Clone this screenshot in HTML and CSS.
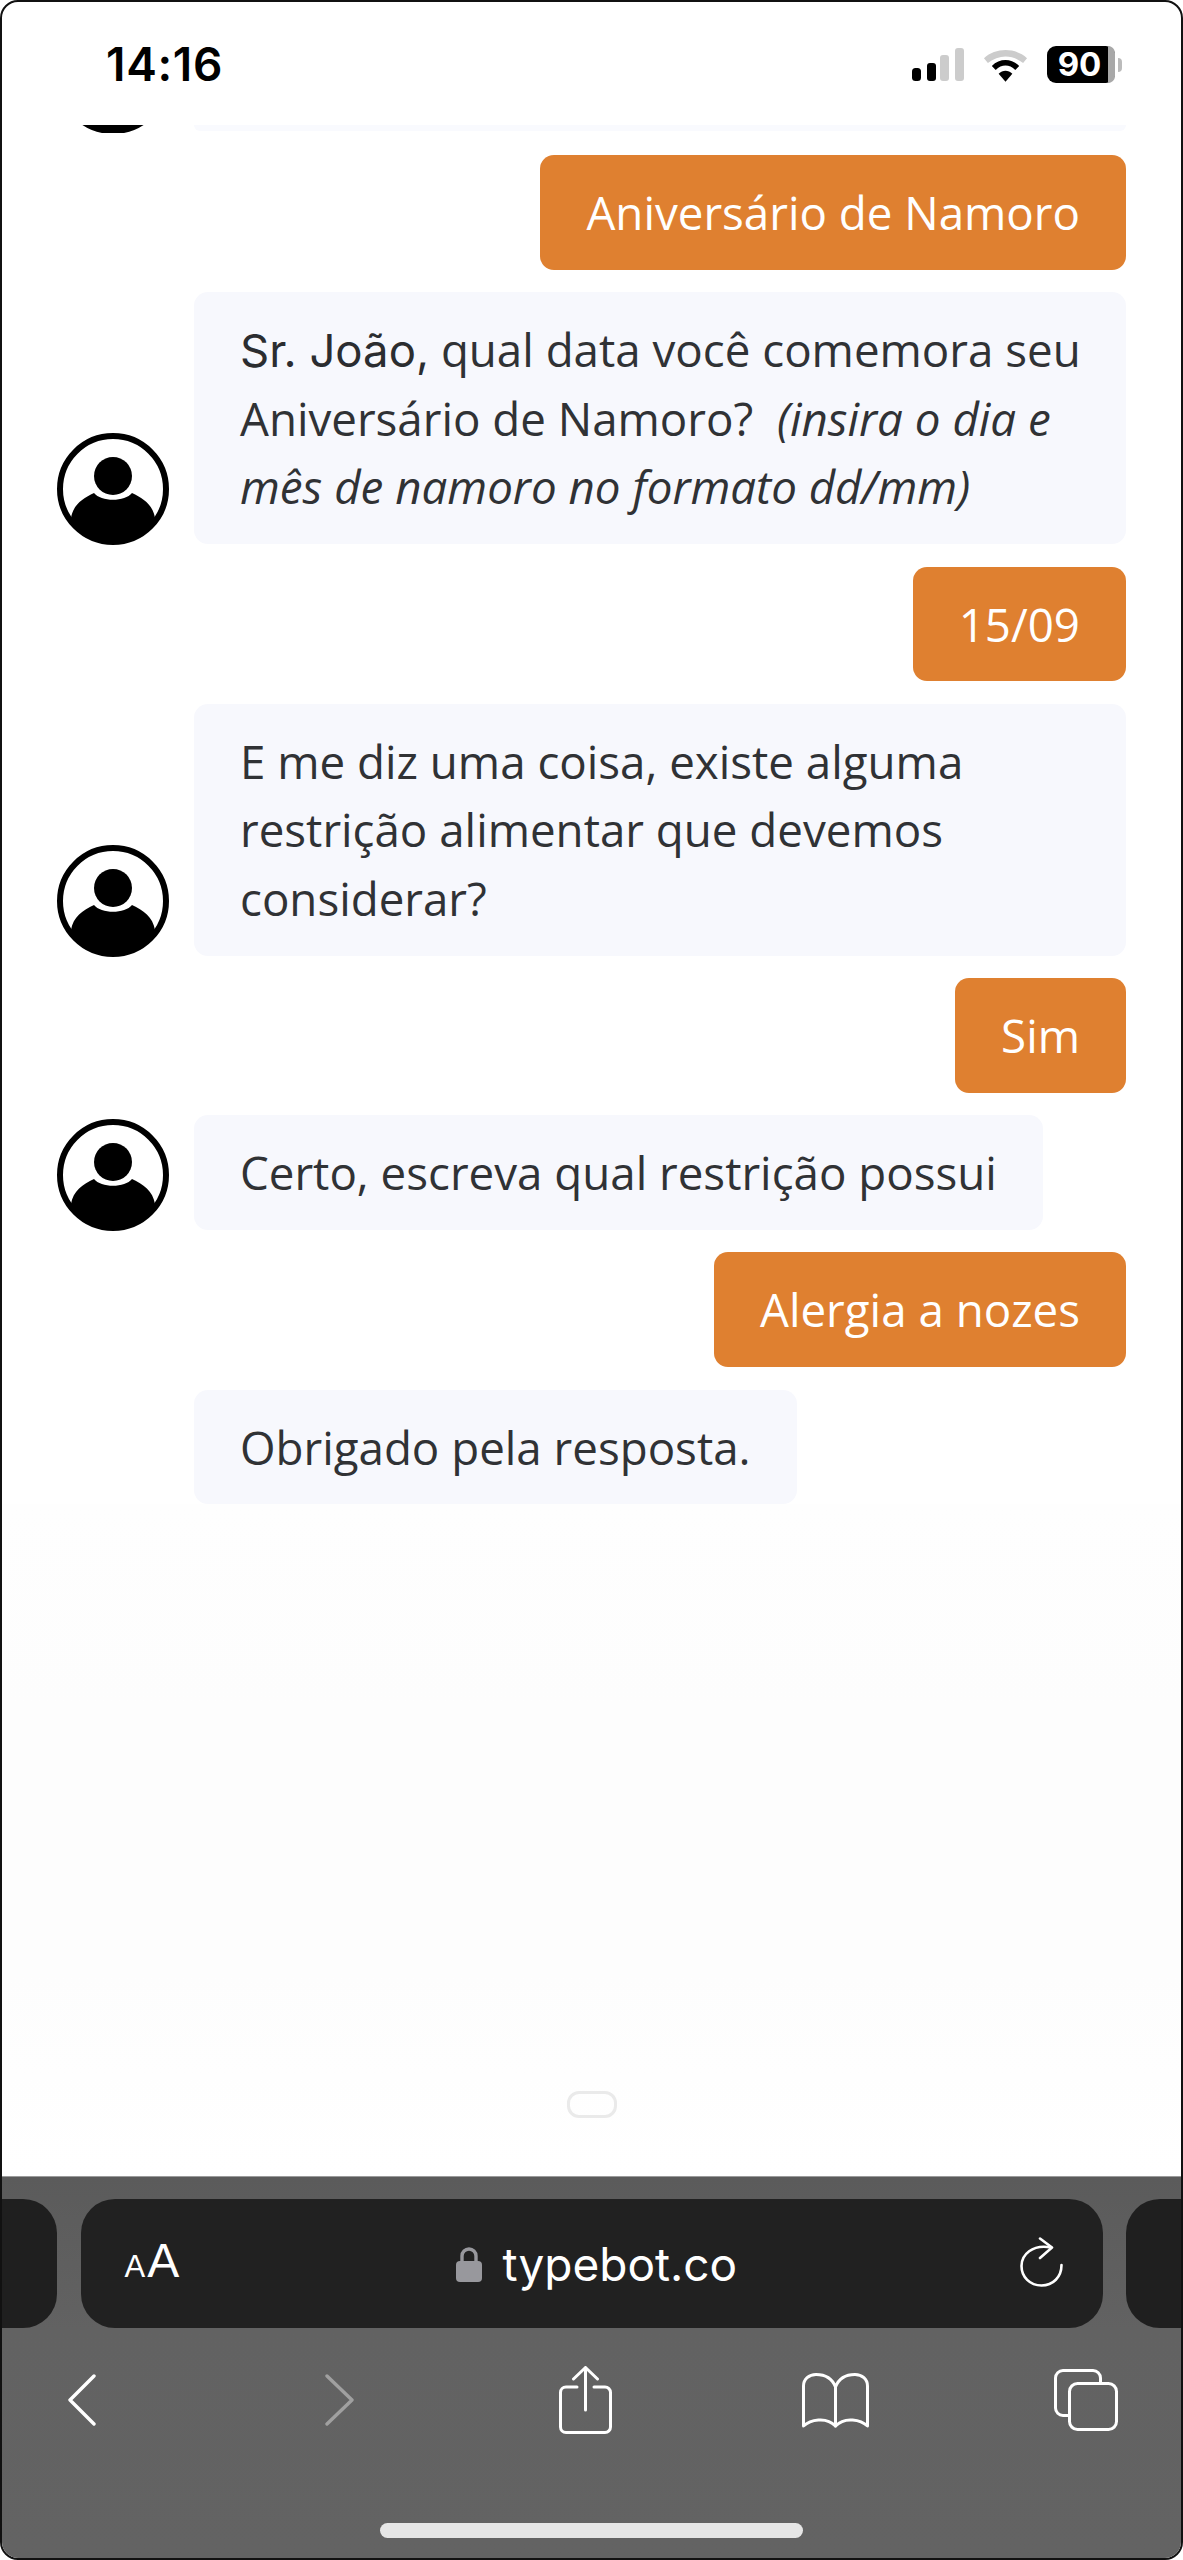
FILE: index.html
```html
<!DOCTYPE html>
<html lang="pt">
<head>
<meta charset="utf-8">
<title>typebot.co</title>
<link rel="stylesheet" href="styles.css">
</head>
<body>
<div class="phone">
  <header class="status">
    <span class="time">14:16</span>
    <div class="status-icons">
      <svg class="signal" width="52" height="33" viewBox="0 0 52 33"><rect x="0" y="20" width="9" height="13" rx="3.5" fill="#000"/><rect x="15" y="15" width="9" height="18" rx="3" fill="#000"/><rect x="28" y="7" width="9" height="26" rx="3" fill="#ccc"/><rect x="43" y="0" width="9" height="33" rx="3" fill="#ccc"/></svg>
      <svg class="wifi" width="45" height="34" viewBox="0 0 46 34"><path d="M1 10C13 -1 33 -1 45 10L41 15C30 6 16 6 5 15Z" fill="#ccc"/><path d="M9 18C17 10 29 10 37 18L33 22C27 16 19 16 13 22Z" fill="#000"/><path d="M16 26C20 22 26 22 30 26L23 34Z" fill="#000"/></svg>
      <div class="battery"><div class="battery-body"><span class="battery-num">90</span><span class="battery-rest"></span></div><span class="battery-cap"></span></div>
    </div>
  </header>

  <main class="chat">
    <div class="clip-row">
      <div class="clip-avatar"><svg class="avatar" viewBox="0 0 112 112"><use href="#person"/></svg></div>
      <div class="clip-bubble"></div>
    </div>

    <div class="row-user"><div class="bubble-user">Aniversário de Namoro</div></div>

    <div class="row-bot">
      <svg class="avatar" viewBox="0 0 112 112"><use href="#person"/></svg>
      <div class="bubble-bot full"><span class="dark">Sr. João,</span> qual data você comemora seu Aniversário de Namoro?&nbsp; <em>(insira o dia e mês de namoro no formato dd/mm)</em></div>
    </div>

    <div class="row-user"><div class="bubble-user">15/09</div></div>

    <div class="row-bot">
      <svg class="avatar" viewBox="0 0 112 112"><use href="#person"/></svg>
      <div class="bubble-bot full">E me diz uma coisa, existe alguma restrição alimentar que devemos considerar?</div>
    </div>

    <div class="row-user"><div class="bubble-user">Sim</div></div>

    <div class="row-bot">
      <svg class="avatar" viewBox="0 0 112 112"><use href="#person"/></svg>
      <div class="bubble-bot">Certo, escreva qual restrição possui</div>
    </div>

    <div class="row-user"><div class="bubble-user">Alergia a nozes</div></div>

    <div class="row-bot">
      <div class="avatar-gap"></div>
      <div class="bubble-bot">Obrigado pela resposta.</div>
    </div>
  </main>

  <div class="pill-wrap"><div class="pill"></div></div>

  <footer class="browser">
    <div class="url-row">
      <div class="tab-side left"></div>
      <div class="url">
        <span class="aa"><span class="aa-small">A</span>A</span>
        <span class="domain">
          <svg class="lock" width="26" height="36" viewBox="0 0 26 36"><path d="M6 17V10a7 7 0 0 1 14 0V17" fill="none" stroke="#98989d" stroke-width="3.4"/><rect x="0" y="15" width="26" height="21" rx="4" fill="#98989d"/></svg>
          <span>typebot.co</span>
        </span>
        <svg class="reload" width="43" height="50" viewBox="0 0 43 50" fill="none" stroke="#fff" stroke-width="2.6" stroke-linecap="round" stroke-linejoin="round"><path d="M31 10.5C12 7 1.5 18 1.5 29C1.5 40 10 48.5 21.5 48.5C33 48.5 41.5 40 41.5 28"/><path d="M20 1.5L32 10.5L20 21"/></svg>
      </div>
      <div class="tab-side right"></div>
    </div>
    <nav class="toolbar">
      <svg width="28" height="52" viewBox="0 0 28 52" fill="none" stroke="#fff" stroke-width="3.4" stroke-linecap="round" stroke-linejoin="round"><path d="M26 2L2 26L26 50"/></svg>
      <svg width="29" height="52" viewBox="0 0 29 52" fill="none" stroke="#a0a0a0" stroke-width="3.4" stroke-linecap="round" stroke-linejoin="round"><path d="M2 2L27 26L2 50"/></svg>
      <svg width="53" height="68" viewBox="0 0 53 68" fill="none" stroke="#fff" stroke-width="3" stroke-linecap="round" stroke-linejoin="round"><path d="M18 21H7a5.500 5.500 0 0 0-5.500 5.500V61a5.500 5.500 0 0 0 5.500 5.500H46a5.500 5.500 0 0 0 5.500-5.500V26.500a5.500 5.500 0 0 0-5.500-5.500H35"/><path d="M26.500 44V2"/><path d="M14.500 13L26.500 1.500L38.500 13"/></svg>
      <svg width="67" height="55" viewBox="0 0 67 55" fill="none" stroke="#fff" stroke-width="3" stroke-linecap="round" stroke-linejoin="round"><path d="M33.500 14C30 5 22 1.500 14 1.500C7 1.500 1.500 6 1.500 13V53C8 47 24 43 33.500 53C43 43 59 47 65.500 53V13C65.500 6 60 1.500 53 1.500C45 1.500 37 5 33.500 14Z"/><path d="M33.500 14V53"/></svg>
      <svg width="64" height="62" viewBox="0 0 64 62" fill="none" stroke="#fff" stroke-width="3" stroke-linejoin="round"><path d="M14 46.500H9a7.500 7.500 0 0 1-7.500-7.500V9A7.500 7.500 0 0 1 9 1.500H39A7.500 7.500 0 0 1 46.500 9v5"/><rect x="15.500" y="14.500" width="47" height="46" rx="8"/></svg>
    </nav>
    <div class="home-wrap"><div class="home"></div></div>
  </footer>
</div>

<svg class="defs" width="0" height="0"><defs><g id="person"><circle cx="56" cy="56" r="53" fill="#fff" stroke="#000" stroke-width="6"/><circle cx="56" cy="43" r="19"/><path d="M14 85C16 72 26 65 37 60C44 69 68 69 75 60C86 65 96 72 98 85C88 103 72 110 56 110C40 110 24 103 14 85Z"/></g></defs></svg>
</body>
</html>
```

FILE: styles.css
```css
* { box-sizing: border-box; }
html, body { margin: 0; padding: 0; background: #fff; }
body { width: 1183px; height: 2560px; overflow: hidden; font-family: "Open Sans", sans-serif; }
.defs { position: absolute; }

.phone {
  width: 1183px; height: 2560px;
  background: #fff;
  border: 2px solid #111;
  border-radius: 18px;
  overflow: hidden;
  display: flex; flex-direction: column;
}

.status {
  height: 123px; flex: none;
  display: flex; justify-content: space-between; align-items: flex-start;
  padding: 37px 59px 0 104px;
}
.time { font: 600 46px/50px Inter, "Liberation Sans", sans-serif; color: #000; letter-spacing: 0.7px; }
.status-icons { display: flex; align-items: center; gap: 19px; margin-top: 7px; }
.battery { display: flex; align-items: center; gap: 3px; }
.battery-body {
  width: 68px; height: 37px; border-radius: 9px;
  background: #000; display: flex;
}
.battery-num { width: 61px; padding-left: 4px; font: 700 33px/37px Inter, "Liberation Sans", sans-serif; color: #fff; text-align: center; }
.battery-rest { width: 7px; background: #a8a8a8; border-radius: 0 9px 9px 0; }
.battery-cap { width: 4px; height: 14px; background: #bbb; border-radius: 0 4px 4px 0; }

.chat { flex: none; display: flex; flex-direction: column; gap: 22.6px; padding: 0 55px; color: #303235; }
.clip-row { height: 7.4px; position: relative; }
.clip-avatar { width: 112px; height: 8px; overflow: hidden; position: relative; }
.clip-avatar .avatar { position: absolute; left: 0; bottom: 0; }
.clip-bubble { position: absolute; left: 137px; right: 0; top: 0; height: 6px; background: #f9fafe; border-radius: 0 0 12px 12px; }

.row-user { display: flex; justify-content: flex-end; }
.bubble-user {
  background: #df8030; color: #fff;
  font-size: 45.7px; line-height: 68.6px;
  padding: 23px 46px; border-radius: 14px;
}
.row-bot { display: flex; align-items: flex-end; gap: 25px; }
.avatar { width: 112px; height: 112px; flex: none; margin-bottom: -1px; }
.avatar-gap { width: 112px; flex: none; }
.bubble-bot {
  background: #f7f8fd; color: #303235;
  font-size: 45.7px; line-height: 68.6px;
  padding: 23px 46px; border-radius: 14px;
}
.bubble-bot.full { flex: 1; padding-right: 36px; }
.dark { color: #2b2d30; font-family: Inter, "Liberation Sans", sans-serif; font-size: 45.5px; line-height: 1; }
em { font-style: italic; }

.pill-wrap {
  flex: 1; display: flex; justify-content: center; align-items: flex-end;
  padding-bottom: 58px;
  background: linear-gradient(#fefefe, #fdfdfd 30%, #fdfdfd 70%, #fff);
}
.pill { width: 50px; height: 27px; border: 3px solid #eaeaea; border-radius: 12px; }

.browser {
  height: 382px; flex: none;
  background: linear-gradient(#5b5b5b, #626262 40%, #636363);
  border-top: 1px solid #9b9b9b;
  display: flex; flex-direction: column;
  padding-top: 22px;
}
.url-row { display: flex; justify-content: space-between; height: 129px; flex: none; }
.tab-side { width: 55px; flex: none; background: #1f1f1f; }
.tab-side.left { border-radius: 0 34px 34px 0; }
.tab-side.right { border-radius: 34px 0 0 34px; }
.url {
  flex: none; width: 1022px;
  background: #212121; border-radius: 34px;
  display: grid; grid-template-columns: 331px auto 1fr; align-items: center;
  padding: 0 40px 0 44px; color: #fff;
}
.aa { font: 400 48px/48px "Liberation Sans", sans-serif; color: #fff; }
.aa-small { font-size: 31px; margin-right: 2px; }
.domain { display: flex; align-items: center; gap: 21px; font: 400 46px/48px Inter, "Liberation Sans", sans-serif; color: #fff; }
.lock { flex: none; }
.reload { justify-self: end; margin-top: -3px; }

.toolbar {
  flex: none; height: 80px; margin-top: 32px;
  display: grid; grid-template-columns: 257px 234px 243px 252px 1fr;
  align-items: center; padding-left: 66px;
}
.home-wrap { flex: 1; display: flex; justify-content: center; padding-top: 83px; }
.home { width: 423px; height: 15px; background: #e6e6e6; border-radius: 8px; }
```
